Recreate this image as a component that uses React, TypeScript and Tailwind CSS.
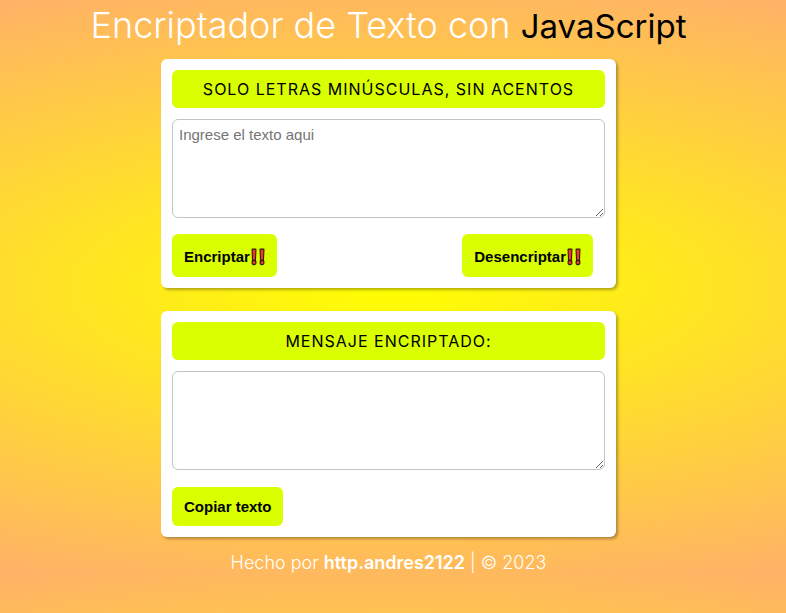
import { useState } from "react";

const button =
  "cursor-pointer rounded-md bg-[#d9ff00] pr-[11px] pl-3 font-['Liberation_Sans',Arial,sans-serif] text-[15px] leading-[18px] font-bold text-black";
const card =
  "flex flex-col rounded-md bg-white p-[11px] shadow-[2px_2px_3px_rgba(0,0,0,0.3)]";
const heading =
  "flex h-[38px] items-center justify-center rounded-md bg-[#d9ff00] pb-px text-center text-base font-normal tracking-[1px] text-black uppercase";
const area =
  "mt-[11px] block h-[99px] w-full resize rounded-md border border-[#c4c4c4] bg-white px-1.5 py-1.5 font-['Liberation_Sans',Arial,sans-serif] text-[15px] leading-[17px] text-black placeholder:text-[#757575]";

const keys: [string, string][] = [
  ["e", "enter"],
  ["i", "imes"],
  ["a", "ai"],
  ["o", "ober"],
  ["u", "ufat"],
];

function encrypt(text: string) {
  return text.replace(/[aeiou]/g, (c) => keys.find(([k]) => k === c)![1]);
}

function decrypt(text: string) {
  return keys.reduce((t, [k, v]) => t.split(v).join(k), text);
}

function DoubleMark() {
  return (
    <svg aria-hidden="true" width="16" height="18" viewBox="0 0 16 18">
      {[4, 12].map((x) => (
        <g key={x}>
          <path
            d={`M${x - 2.5} 1.5q0-1 1-1h3q1 0 1 1l-.5 10.8q.5.8.5 2.2 0 2.8-2.5 2.8t-2.5-2.8q0-1.400.5-2.2z`}
            fill="#2b1c10"
          />
          <path d={`M${x - 1.5} 1.7h3l-.6 10h-1.800z`} fill="#f03a20" />
          <circle cx={x} cy="14.6" r="1.5" fill="#f03a20" />
        </g>
      ))}
    </svg>
  );
}

export default function App() {
  const [input, setInput] = useState("");
  const [output, setOutput] = useState("");

  return (
    <div className="min-h-screen bg-[radial-gradient(118%_55.5%_at_center,#ffff00,#ffb168)] bg-[length:100%_573px] pr-[9px] font-[Inter,'Open_Sans',sans-serif]">
      <h1 className="h-12 pt-[3px] text-center text-[36px] leading-[44px] font-light text-white">
        Encriptador de Texto con{" "}
        <span className="text-[33px] font-normal text-black">JavaScript</span>
      </h1>
      <main className="mx-auto mt-[11px] flex w-full max-w-[455px] flex-col gap-[23px]">
        <section className={card}>
          <h2 className={heading}>
            <label htmlFor="input">Solo letras minúsculas, sin acentos</label>
          </h2>
          <textarea
            id="input"
            className={area}
            placeholder="Ingrese el texto aqui"
            value={input}
            onChange={(e) => setInput(e.target.value)}
          />
          <div className="mt-4 flex justify-between pr-3">
            <button
              type="button"
              className={`${button} flex h-[43px] items-center pt-[2px]`}
              onClick={() => setOutput(encrypt(input))}
            >
              Encriptar
              <DoubleMark />
            </button>
            <button
              type="button"
              className={`${button} flex h-[43px] items-center pt-[2px]`}
              onClick={() => setOutput(decrypt(input))}
            >
              Desencriptar
              <DoubleMark />
            </button>
          </div>
        </section>
        <section className={card}>
          <h2 className={heading}>
            <label htmlFor="output">Mensaje encriptado:</label>
          </h2>
          <textarea
            id="output"
            className={area}
            value={output}
            onChange={(e) => setOutput(e.target.value)}
          />
          <button
            type="button"
            className={`${button} mt-[17px] h-[39px] self-start`}
            onClick={() => navigator.clipboard?.writeText(output)}
          >
            Copiar texto
          </button>
        </section>
      </main>
      <footer className="pt-[14px] text-center text-lg leading-6 font-light text-white">
        Hecho por{" "}
        <a href="#andres" className="font-semibold">
          http.andres2122
        </a>{" "}
        | © 2023
      </footer>
    </div>
  );
}
